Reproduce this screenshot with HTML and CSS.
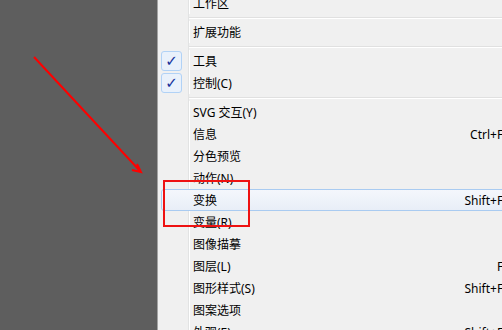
FILE: index.html
```html
<!DOCTYPE html>
<html lang="zh-CN">
<head>
  <meta charset="UTF-8" />
  <title>窗口菜单</title>
  <link rel="stylesheet" href="styles.css">
</head>
<body>
  <div class="workspace"></div>

  <div class="menu">
    <div class="item"><span class="icon"></span><span class="label">工作区</span><span class="key"></span></div>
    <div class="sep"></div>
    <div class="item"><span class="icon"></span><span class="label">扩展功能</span><span class="key"></span></div>
    <div class="sep"></div>
    <div class="item"><span class="icon check">&#10003;</span><span class="label">工具</span><span class="key"></span></div>
    <div class="item"><span class="icon check">&#10003;</span><span class="label">控制(C)</span><span class="key"></span></div>
    <div class="sep"></div>
    <div class="item"><span class="icon"></span><span class="label">SVG 交互(Y)</span><span class="key"></span></div>
    <div class="item"><span class="icon"></span><span class="label">信息</span><span class="key">Ctrl+F8</span></div>
    <div class="item"><span class="icon"></span><span class="label">分色预览</span><span class="key"></span></div>
    <div class="item"><span class="icon"></span><span class="label">动作(N)</span><span class="key"></span></div>
    <div class="item hover"><span class="icon"></span><span class="label">变换</span><span class="key">Shift+F8</span></div>
    <div class="item"><span class="icon"></span><span class="label">变量(R)</span><span class="key"></span></div>
    <div class="item"><span class="icon"></span><span class="label">图像描摹</span><span class="key"></span></div>
    <div class="item"><span class="icon"></span><span class="label">图层(L)</span><span class="key">F7</span></div>
    <div class="item"><span class="icon"></span><span class="label">图形样式(S)</span><span class="key">Shift+F5</span></div>
    <div class="item"><span class="icon"></span><span class="label">图案选项</span><span class="key"></span></div>
    <div class="item"><span class="icon"></span><span class="label">外观(E)</span><span class="key">Shift+F6</span></div>
  </div>

  <!-- annotations drawn over the screenshot -->
  <svg class="arrow" width="160" height="190" viewBox="0 0 160 190">
    <path d="M34 57 L141 172 M132 170 L141 172 L137 164" fill="none" stroke="#ff0000" stroke-width="2"/>
  </svg>
  <div class="mark"></div>
</body>
</html>
```

FILE: styles.css
```css
body {
  margin: 0;
  height: 330px;
  overflow: hidden;
  display: flex;
  align-items: flex-start;
  background: #5e5e5e;
  font-family: "Noto Sans", "Noto Sans CJK SC", sans-serif;
  font-size: 12px;
  color: #000;
}
.workspace {
  width: 157px;
  height: 330px;
  flex-shrink: 0;
  border-right: 1px solid #a3a3a3;
}
.menu {
  flex-shrink: 0;
  width: 380px;
  margin-top: -8px;
  padding-bottom: 20px;
  background: linear-gradient(to right, #f0f0f0 30px, #e2e3e3 30px, #e2e3e3 31px, #fff 31px, #fff 32px, #f0f0f0 32px);
}
.item {
  display: grid;
  grid-template-columns: 31px 1fr auto;
  align-items: center;
  height: 22px;
  margin-left: 3px;
  padding-right: 27px;
  border: 1px solid transparent;
  border-radius: 3px;
  box-sizing: border-box;
}
.item.hover {
  border-color: #a9cbf1;
  background: linear-gradient(#f4f7fc, #e8eef7);
}
.icon {
  width: 21px;
  height: 20px;
  margin-left: -1px;
}
.check {
  box-sizing: border-box;
  border: 1px solid #b1d2f6;
  border-radius: 3px;
  background: #e9f1fb;
  color: #14309a;
  font-family: "DejaVu Sans", sans-serif;
  font-size: 15px;
  line-height: 18px;
  text-align: center;
}
.label {
  white-space: nowrap;
}
.key {
  white-space: nowrap;
}
.sep {
  height: 7px;
  margin-left: 31px;
  background: linear-gradient(#f0f0f0 3px, #e0e0e0 3px, #e0e0e0 4px, #fff 4px, #fff 5px, #f0f0f0 5px);
}
.arrow {
  position: absolute;
  left: 0;
  top: 0;
}
.mark {
  position: absolute;
  left: 163px;
  top: 180px;
  width: 83px;
  height: 43px;
  border: 2px solid #ee1111;
}
```
